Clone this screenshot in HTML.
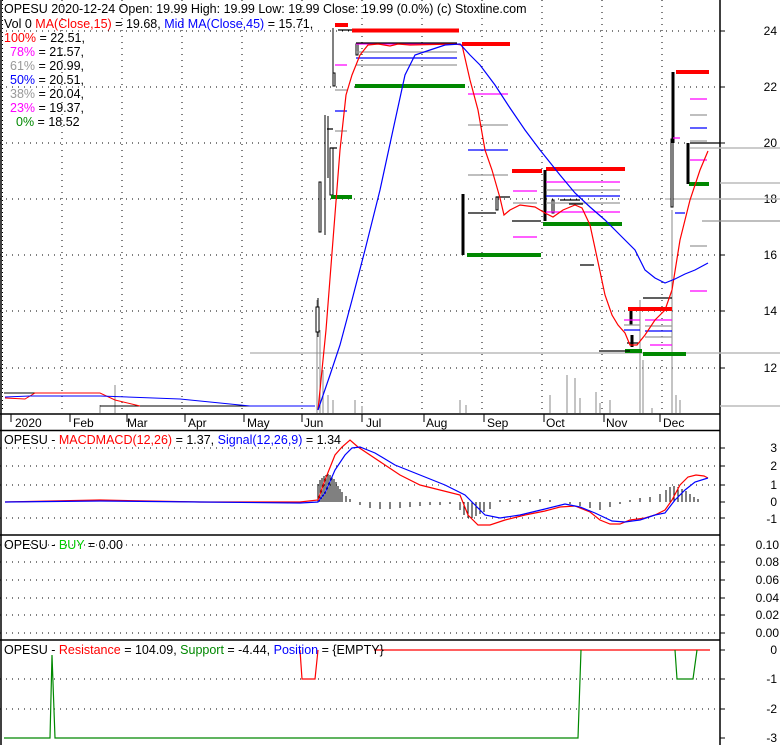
<!DOCTYPE html>
<html><head><meta charset="utf-8"><style>
body{margin:0;background:#fff;}
svg{display:block;font-family:"Liberation Sans",sans-serif;}
</style></head><body>
<svg width="780" height="745" viewBox="0 0 780 745" xmlns="http://www.w3.org/2000/svg">
<defs>
<pattern id="dots" x="2" y="0" width="60" height="4" patternUnits="userSpaceOnUse"><rect x="0" y="0" width="1" height="1" fill="#000"/></pattern>
</defs>
<rect width="780" height="745" fill="#fff"/>
<!-- grid dots main -->
<g fill="#000">
<g id="vcol">
<rect x="2" y="0" width="1" height="410" fill="url(#dots)"/>
</g>
</g>
<g stroke="#000" stroke-width="1" stroke-dasharray="1 5">
<path d="M62 0V410M122 0V410M182 0V410M242 0V410M302 0V410M362 0V410M422 0V410M482 0V410M542 0V410M602 0V410M662 0V410"/>
<path d="M0 31H720M0 87H720M0 143H720M0 199H720M0 255H720M0 311H720M0 368H720"/>
<path d="M0 448H720M0 466H720M0 485H720M0 518H720"/>
<path d="M0 545H720M0 562H720M0 580H720M0 598H720M0 615H720M0 633H720"/>
<path d="M0 679H720M0 709H720"/>
</g>
<!-- panel borders -->
<g stroke="#000" stroke-width="1.5" fill="none">
<path d="M720 0V745"/>
<path d="M0 414H720"/>
<path d="M0 430.5H720M0 535H720M0 640H720"/>
<path d="M1 0V745"/>
</g>
<!-- axis ticks -->
<g stroke="#000"><path d="M720 31h5M720 87h5M720 143h5M720 199h5M720 255h5M720 311h5M720 368h5M720 448h5M720 466h5M720 485h5M720 502h5M720 518h5M720 545h5M720 562h5M720 580h5M720 598h5M720 615h5M720 633h5M720 650h5M720 679h5M720 709h5M720 738h5"/>
<path d="M11 414v8M70 414v8M127 414v8M185 414v8M244 414v8M302 414v8M362 414v8M424 414v8M484 414v8M544 414v8M604 414v8M660 414v8"/></g>
<!-- axis labels -->
<g font-size="12" fill="#000" text-anchor="end">
<text x="777" y="35">24</text><text x="777" y="91">22</text><text x="777" y="147">20</text><text x="777" y="203">18</text><text x="777" y="259">16</text><text x="777" y="315">14</text><text x="777" y="372">12</text>
<text x="777" y="452">3</text><text x="777" y="470">2</text><text x="777" y="489">1</text><text x="777" y="506">0</text><text x="777" y="523">-1</text>
<text x="779" y="549">0.10</text><text x="779" y="566">0.08</text><text x="779" y="584">0.06</text><text x="779" y="602">0.04</text><text x="779" y="619">0.02</text><text x="779" y="637">0.00</text>
<text x="777" y="654">0</text><text x="777" y="683">-1</text><text x="777" y="713">-2</text><text x="777" y="742">-3</text>
</g>
<g font-size="12" fill="#000">
<text x="15" y="427">2020</text><text x="73" y="427">Feb</text><text x="127" y="427">Mar</text><text x="188" y="427">Apr</text><text x="247" y="427">May</text><text x="304" y="427">Jun</text><text x="366" y="427">Jul</text><text x="426" y="427">Aug</text><text x="487" y="427">Sep</text><text x="546" y="427">Oct</text><text x="606" y="427">Nov</text><text x="663" y="427">Dec</text>
</g>
<!-- gray lines right -->
<g stroke="#bbb" stroke-width="1.5"><path d="M250 353H780M705 148H780M665 199H780M720 183H780M720 406H780M690 148H780"/></g>
<!-- volume bars -->
<g stroke="#888" stroke-width="1">
<path d="M317 413V300M320 413V330M323 413V370M328 413V395M333 413V400M115 413V385M100 413V405M355 413V400M362 413V406M460 413V400M466 413V405M550 413V395M567 413V375M575 413V378M580 413V398M596 413V392M600 413V403M610 413V400M640 413V300M643 413V360M652 413V408M672 413V210M676 413V395M680 413V400"/>
</g>
<!-- early flat -->
<g fill="none" stroke-width="1">
<path d="M4 393H98" stroke="#000"/>
<path d="M100 406H315" stroke="#000"/>
<path d="M5 398L25 399L35 393H100L115 400L140 406" stroke="#f00"/>
<path d="M5 397L30 396H100L180 399L250 406H315" stroke="#00f"/>
</g>
<!-- candles -->
<g stroke="#000" fill="#fff" stroke-width="1">
<path d="M318 298V337M333 28V85M325 115V235M328 116V178"/>
<rect x="316" y="307" width="3" height="25"/>
<rect x="319" y="182" width="2" height="50"/>
<rect x="330" y="148" width="3" height="47"/>
<rect x="333" y="73" width="2" height="13"/>
<rect x="356" y="44" width="2" height="11"/>
<rect x="496" y="197" width="2" height="13"/>
<rect x="552" y="200" width="2" height="13"/>
<rect x="671" y="139" width="2" height="68"/>
</g>
<!-- fib levels -->
<g stroke-width="4" fill="none">
<path d="M352 30.5H459M335 25H348M462 44H510M512 171H542M546 169H625M628 309H672M676 72H709" stroke="#f00"/>
<path d="M355 86H465M467 255H541M543 224H622M643 354H686M625 351H642M689 184H709M331 197H352" stroke="#080"/>
</g>
<g stroke-width="3" fill="none" stroke="#000">
<path d="M463 194V255M545 170V221M673 72V143M688 143V184M631 311V325M632 335V347"/>
</g>
<g stroke-width="1.2" fill="none">
<path d="M356 44H457M335 65H347M468 94H508M513 191H537M513 237H537M546 182H620M546 212H620M645 320H672M690 99H707M690 160H707M624 320H640M650 345H672M673 138H680M690 291H707" stroke="#f0f"/>
<path d="M356 52H457M356 65H457M335 90H347M335 131H347M468 125H508M468 175H508M513 203H537M546 190H620M546 203H620M645 326H672M645 337H672M624 325H640M690 115H707M690 141H707M690 246H707M702 221H780" stroke="#999"/>
<path d="M356 58H457M335 111H347M468 150H508M546 196H620M645 331H672M624 330H640M690 128H707M675 213H685" stroke="#00f"/>
<path d="M338 30H352M356 43H457M468 213H496M496 197H510M512 221H541M560 200H580M569 204H583M580 265H594M599 351H630M643 298H672M627 343H638M690 143H720M327 129H333M330 148H337" stroke="#000"/>
</g>
<!-- MAs -->
<path d="M318 410L326 330L333 240L340 150L346 95L352 75L360 55L368 45L378 44L390 46L398 44L410 45L455 44L462 45L470 80L478 110L485 150L492 170L500 198L504 215L510 210L520 205L535 207L545 213L553 217L563 210L575 205L582 208L590 225L598 262L605 295L612 315L618 325L625 333L630 345L637 345L645 335L655 320L665 310L672 290L680 240L690 200L700 170L708 151" fill="none" stroke="#f00" stroke-width="1.2"/>
<path d="M318 410L330 375L340 345L352 300L365 250L380 190L393 130L405 75L415 55L430 50L445 45L460 44L470 55L480 65L495 85L510 108L525 130L540 150L560 175L575 193L590 207L605 220L620 235L635 250L645 270L655 278L665 283L675 279L685 274L695 270L708 263" fill="none" stroke="#00f" stroke-width="1.2"/>
<!-- MACD -->
<g stroke="#000" stroke-width="1">
<path d="M318 502V484M320 502V480M322 502V478M324 502V476M326 502V475M328 502V474M330 502V475M332 502V477M334 502V479M336 502V482M338 502V486M340 502V489M342 502V492M346 502V496M350 502V499M360 502V505M370 502V508M380 502V509M390 502V509M400 502V508M410 502V507M420 502V506M430 502V505M440 502V505M450 502V504M460 502V510M464 502V515M468 502V518M472 502V518M476 502V516M480 502V514M484 502V512M490 502V509M500 502V500M510 502V500M520 502V500M530 502V500M540 502V499M550 502V500M560 502V502M570 502V504M580 502V506M590 502V508M600 502V510M610 502V507M620 502V504M630 502V500M640 502V498M650 502V497M660 502V494M666 502V490M670 502V487M674 502V486M678 502V487M682 502V489M686 502V491M690 502V494M694 502V497M698 502V499"/>
</g>
<path d="M5 502L100 500L200 502L300 502L318 500L325 480L335 455L342 447L350 440L358 447L370 455L385 465L400 475L420 485L440 490L460 495L468 515L478 525L490 525L505 520L525 515L545 511L560 507L575 506L590 512L600 520L610 524L620 524L630 520L645 518L655 515L665 510L672 500L680 485L688 477L696 475L704 476L708 478" fill="none" stroke="#f00" stroke-width="1.2"/>
<path d="M5 502L100 501L200 502L300 503L318 502L325 493L335 470L345 455L352 448L360 447L375 453L395 465L420 475L445 485L465 495L475 505L485 515L500 518L520 515L545 509L565 504L580 507L595 513L612 521L625 522L640 520L655 515L665 513L675 500L685 490L695 482L708 478" fill="none" stroke="#00f" stroke-width="1.2"/>
<!-- Resistance / support -->
<path d="M374 650H710" stroke="#f00" stroke-width="1.2" fill="none"/>
<path d="M300 650L302 679H315L318 650" stroke="#f00" stroke-width="1.2" fill="none"/>
<path d="M4 738H50L52 655L55 738H578L581 650M675 650L677 679H693L697 650" stroke="#080" stroke-width="1.2" fill="none"/>
<!-- header texts -->
<g font-size="12.5">
<text x="4" y="13" fill="#000">OPESU  2020-12-24 Open: 19.99  High: 19.99  Low: 19.99  Close: 19.99 (0.0%)  (c) Stoxline.com</text>
<text x="4" y="28"><tspan fill="#000">Vol 0 </tspan><tspan fill="#f00">MA(Close,15)</tspan><tspan fill="#000"> = 19.68, </tspan><tspan fill="#00f">Mid MA(Close,45)</tspan><tspan fill="#000"> = 15.71,</tspan></text>
<text x="4" y="42"><tspan fill="#f00">100%</tspan><tspan fill="#000"> = 22.51,</tspan></text>
<text x="10" y="56"><tspan fill="#f0f">78%</tspan><tspan fill="#000"> = 21.57,</tspan></text>
<text x="10" y="70"><tspan fill="#999">61%</tspan><tspan fill="#000"> = 20.99,</tspan></text>
<text x="10" y="84"><tspan fill="#00f">50%</tspan><tspan fill="#000"> = 20.51,</tspan></text>
<text x="10" y="98"><tspan fill="#999">38%</tspan><tspan fill="#000"> = 20.04,</tspan></text>
<text x="10" y="112"><tspan fill="#f0f">23%</tspan><tspan fill="#000"> = 19.37,</tspan></text>
<text x="16" y="126"><tspan fill="#080">0%</tspan><tspan fill="#000"> = 18.52</tspan></text>
<text x="4" y="444"><tspan fill="#000">OPESU - </tspan><tspan fill="#f00">MACDMACD(12,26)</tspan><tspan fill="#000"> = 1.37, </tspan><tspan fill="#00f">Signal(12,26,9)</tspan><tspan fill="#000"> = 1.34</tspan></text>
<text x="4" y="549"><tspan fill="#000">OPESU - </tspan><tspan fill="#0c0">BUY</tspan><tspan fill="#000"> = 0.00</tspan></text>
<text x="4" y="654"><tspan fill="#000">OPESU - </tspan><tspan fill="#f00">Resistance</tspan><tspan fill="#000"> = 104.09, </tspan><tspan fill="#080">Support</tspan><tspan fill="#000"> = -4.44, </tspan><tspan fill="#00f">Position</tspan><tspan fill="#000"> = {EMPTY}</tspan></text>
</g>
</svg>
</body></html>
